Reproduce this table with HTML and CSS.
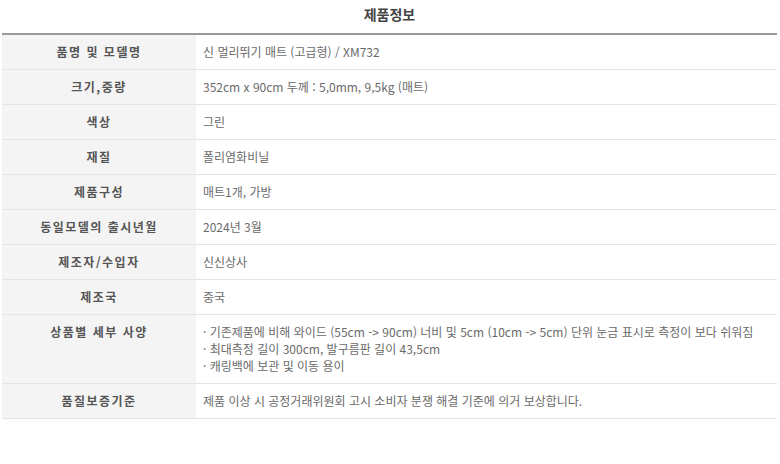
FILE: index.html
```html
<!DOCTYPE html>
<html lang="ko">
<head>
<meta charset="utf-8">
<link rel="stylesheet" href="styles.css">
</head>
<body>
<div class="wrap">
  <h2 class="title">제품정보</h2>
  <table class="info">
    <tr><th>품명 및 모델명</th><td>신 멀리뛰기 매트 (고급형) / XM732</td></tr>
    <tr><th>크기,중량</th><td>352cm x 90cm 두께 : 5,0mm, 9,5kg (매트)</td></tr>
    <tr><th>색상</th><td>그린</td></tr>
    <tr><th>재질</th><td>폴리염화비닐</td></tr>
    <tr><th>제품구성</th><td>매트1개, 가방</td></tr>
    <tr><th>동일모델의 출시년월</th><td>2024년 3월</td></tr>
    <tr><th>제조자/수입자</th><td>신신상사</td></tr>
    <tr><th>제조국</th><td>중국</td></tr>
    <tr><th>상품별 세부 사양</th><td>· 기존제품에 비해 와이드 (55cm -&gt; 90cm) 너비 및 5cm (10cm -&gt; 5cm) 단위 눈금 표시로 측정이 보다 쉬워짐<br>· 최대측정 길이 300cm, 발구름판 길이 43,5cm<br>· 캐링백에 보관 및 이동 용이</td></tr>
    <tr><th>품질보증기준</th><td>제품 이상 시 공정거래위원회 고시 소비자 분쟁 해결 기준에 의거 보상합니다.</td></tr>
  </table>
</div>
</body>
</html>
```
FILE: styles.css
```css
html, body {
  margin: 0;
  padding: 0;
  background: #fff;
}
.wrap {
  padding: 0 3px 0 2px;
  font-family: "Noto Sans CJK KR", "Noto Sans", sans-serif;
}
.title {
  margin: 0;
  height: 33px;
  line-height: 28px;
  text-align: center;
  font-size: 14px;
  font-weight: bold;
  color: #444;
}
.info {
  width: 775px;
  border-collapse: collapse;
  border-top: 2px solid #9a9a9a;
  font-size: 12px;
}
.info th, .info td {
  padding: 8px 0 9px;
  line-height: 17px;
  border-bottom: 1px solid #e4e4e4;
  vertical-align: top;
}
.info th {
  width: 194px;
  background: #f4f4f4;
  color: #555;
  font-weight: bold;
  text-align: center;
  letter-spacing: 1.5px;
}
.info td {
  padding-left: 7px;
  color: #6a6a6a;
  text-align: left;
}
```
